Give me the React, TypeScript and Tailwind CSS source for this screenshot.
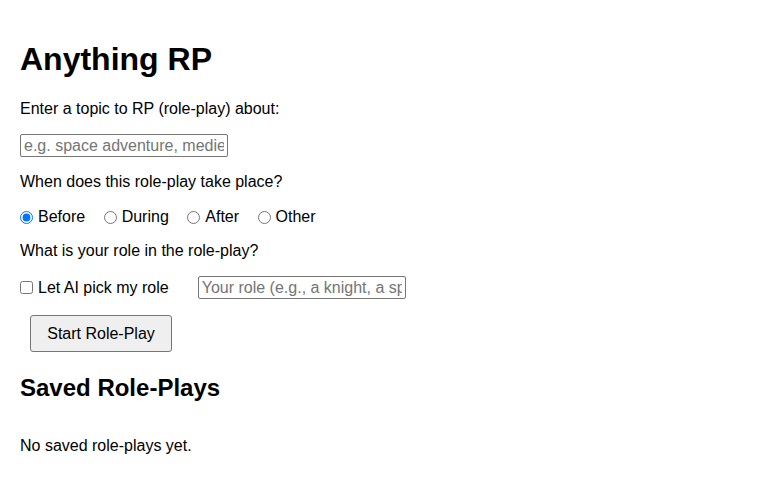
import { useState } from 'react';

const times = ['Before', 'During', 'After', 'Other'];

const App = () => {
  const [topic, setTopic] = useState('');
  const [when, setWhen] = useState('Before');
  const [aiRole, setAiRole] = useState(false);
  const [role, setRole] = useState('');

  return (
    <div className="min-h-[480px] bg-white px-[20px] pt-[41px] text-black font-['Liberation_Sans',Arial,sans-serif] text-[16px] leading-[18px]">
      <h1 className="text-[32px] leading-[37px] font-bold">Anything RP</h1>

      <p className="mt-[22px]">Enter a topic to RP (role-play) about:</p>
      <input
        type="text"
        value={topic}
        onChange={e => setTopic(e.target.value)}
        placeholder="e.g. space adventure, medieval quest"
        className="mt-[16px] block w-[208px] h-[23px] px-[3px] border border-[#767676] rounded-[2px] text-[16px] placeholder:text-[#757575] outline-none"
      />

      <p className="mt-[16px]">When does this role-play take place?</p>
      {/* Time options */}
      <div className="mt-[17px] flex items-center gap-[18.5px] h-[18px]">
        {times.map(t => (
          <label key={t} className="flex items-center gap-[5px]">
            <input
              type="radio"
              name="when"
              checked={when === t}
              onChange={() => setWhen(t)}
              className="w-[13px] h-[13px] m-0"
            />
            {t}
          </label>
        ))}
      </div>

      <p className="mt-[16px]">What is your role in the role-play?</p>
      <div className="mt-[16px] flex items-center h-[23px]">
        <label className="flex items-center gap-[5px]">
          <input
            type="checkbox"
            checked={aiRole}
            onChange={e => setAiRole(e.target.checked)}
            className="w-[13px] h-[13px] m-0"
          />
          Let AI pick my role
        </label>
        <input
          type="text"
          value={role}
          onChange={e => setRole(e.target.value)}
          placeholder="Your role (e.g., a knight, a spy)"
          className="ml-[29px] w-[208px] h-[23px] px-[3px] border border-[#767676] rounded-[2px] text-[16px] placeholder:text-[#757575] outline-none"
        />
      </div>

      <button className="mt-[16px] ml-[10px] block h-[37px] w-[142px] bg-[#efefef] border border-[#767676] rounded-[3px] text-[16px]">
        Start Role-Play
      </button>

      <h2 className="mt-[22px] text-[24px] leading-[28px] font-bold">Saved Role-Plays</h2>
      <p className="mt-[35px]">No saved role-plays yet.</p>
    </div>
  );
};

export default App;
